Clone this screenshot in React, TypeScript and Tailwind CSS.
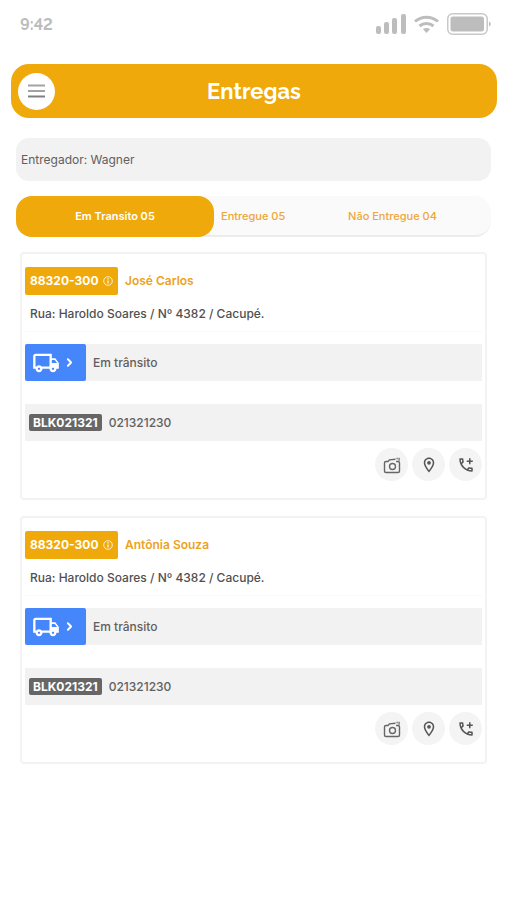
import { useState } from "react";
import { MdOutlineLocalShipping, MdOutlineAddIcCall, MdOutlineLocationOn } from "react-icons/md";
import { ChevronRight } from "lucide-react";

const deliveries = [
  { zip: "88320-300", name: "José Carlos", address: "Rua: Haroldo Soares / Nº 4382 / Cacupé.", code: "BLK021321", number: "021321230" },
  { zip: "88320-300", name: "Antônia Souza", address: "Rua: Haroldo Soares / Nº 4382 / Cacupé.", code: "BLK021321", number: "021321230" },
];

function StatusBar() {
  return (
    <div className="flex h-12 items-center justify-between pl-5 pr-[15px]">
      <time className="pt-[2px] font-['Raleway','Lato',sans-serif] text-base font-bold text-[#bcbcbc] lining-nums">9:42</time>
      <div className="flex items-center gap-2">
        <svg width="30" height="20" viewBox="0 0 30 20" fill="#bdbdbd" aria-hidden="true">
          <rect x="0" y="12" width="5" height="8" rx="2" />
          <rect x="8" y="8" width="5" height="12" rx="2" />
          <rect x="16" y="4" width="5" height="16" rx="2" />
          <rect x="25" y="0" width="5" height="20" rx="2" />
        </svg>
        <svg width="25" height="18" viewBox="0 0 25 18" fill="none" stroke="#bdbdbd" strokeWidth="3" aria-hidden="true">
          <path d="M1 6.5C7.500 .7 17.500 .7 24 6.500" />
          <path d="M5.500 11C9.500 7.500 15.500 7.500 19.500 11" />
          <path d="M9 14.300c2-1.700 5-1.700 7 0L12.500 18z" fill="#bdbdbd" stroke="none" />
        </svg>
        <svg width="44" height="22" viewBox="0 0 44 22" aria-hidden="true">
          <rect x="0.750" y="0.750" width="39.500" height="20.500" rx="5" fill="none" stroke="#c9c9c9" strokeWidth="1.500" />
          <rect x="3.500" y="3.500" width="33.500" height="15" rx="2.500" fill="#bdbdbd" />
          <path d="M42 8.500c2.300.8 2.300 4.200 0 5z" fill="#bdbdbd" />
        </svg>
      </div>
    </div>
  );
}

function CameraIcon() {
  return (
    <svg width="18" height="18" viewBox="0 0 18 18" fill="none" stroke="#666" strokeWidth="1.400" aria-hidden="true">
      <path d="M12.500 3.200 6.500 3.800 5 5.500H3A1.500 1.500 0 0 0 1.500 7v8A1.500 1.500 0 0 0 3 16.500h12a1.500 1.500 0 0 0 1.500-1.500V7A1.500 1.500 0 0 0 15 5.500h-2" />
      <circle cx="9.500" cy="10.500" r="3" />
      <path d="M13.500 2.500h1.200M15.500 2.500h1.200M15.500 4h1.200" />
    </svg>
  );
}

const roundButton = "flex size-[33px] items-center justify-center rounded-full bg-[#f4f4f4] text-[#555]";

function DeliveryCard({ delivery }: { delivery: (typeof deliveries)[number] }) {
  return (
    <article className="rounded-[4px] border-2 border-[#f3f3f3] px-[3px] pt-[13px] pb-[17px]">
      <div className="flex items-center gap-[7px]">
        <button className="flex h-7 w-[93px] items-center justify-between rounded-[2px] bg-[#efa90a] px-[5px] text-[12px] font-bold text-white">
          {delivery.zip}
          <svg width="10" height="10" viewBox="0 0 10 10" fill="none" stroke="#fff" strokeOpacity=".8" aria-hidden="true">
            <circle cx="5" cy="5" r="4.300" />
            <path d="M5 4.400V7.500M5 2.300v1.200" strokeWidth="1.500" />
          </svg>
        </button>
        <h2 className="text-[12px] font-semibold text-[#eda21c]">{delivery.name}</h2>
      </div>
      <p className="mt-[9px] border-b border-[#fafafa] pb-[7px] pl-[5px] text-[12px] leading-5 font-medium text-[#505050]">{delivery.address}</p>
      <div className="mt-[12px] flex h-[37px] items-center gap-[7px] bg-[#f2f2f2]">
        <button aria-label="Em trânsito" className="flex h-full w-[61px] items-center gap-[3px] rounded-[2px] bg-[#4686fb] pl-[7px] text-white">
          <MdOutlineLocalShipping size={28} />
          <ChevronRight size={13} strokeWidth={3.5} />
        </button>
        <span className="text-[12px] font-medium text-[#606060]">Em trânsito</span>
      </div>
      <div className="mt-[23px] flex h-[37px] items-center gap-[7px] bg-[#f2f2f2] pl-1">
        <span className="flex h-[17px] items-center rounded-[2px] bg-[#666] px-1 text-[12px] font-bold text-white">{delivery.code}</span>
        <span className="text-[12px] font-medium text-[#606060]">{delivery.number}</span>
      </div>
      <div className="mt-[7px] flex justify-end gap-1">
        <button aria-label="Câmera" className={roundButton}><CameraIcon /></button>
        <button aria-label="Localização" className={roundButton}><MdOutlineLocationOn size={18} /></button>
        <button aria-label="Ligar" className={roundButton}><MdOutlineAddIcCall size={18} /></button>
      </div>
    </article>
  );
}

export default function App() {
  const [tab, setTab] = useState(0);
  const tabs = [
    { label: "Em Transito 05", place: "w-[198px] shrink-0 text-center" },
    { label: "Entregue 05", place: "w-[80px] shrink-0 pl-[7px] text-left" },
    { label: "Não Entregue 04", place: "grow text-center" },
  ];
  return (
    <div className="min-h-screen bg-white font-['Inter','Liberation_Sans',sans-serif]">
      <StatusBar />
      <header className="mt-4 mr-[9px] ml-[11px] flex h-[54px] items-center rounded-[18px] bg-[#efa90a] px-[7px]">
        <button aria-label="Menu" className="flex size-[37px] shrink-0 items-center justify-center rounded-full bg-white">
          <svg width="17" height="14" viewBox="0 0 17 14" aria-hidden="true">
            <path d="M0 1.500h17M0 7h17" stroke="#a3a3a3" strokeWidth="2" />
            <path d="M0 12.500h17" stroke="#808080" strokeWidth="2" />
          </svg>
        </button>
        <h1 className="grow pr-[37px] text-center font-['Raleway','Lato',sans-serif] text-[22px] font-bold text-white">Entregas</h1>
      </header>
      <main>
        <p className="mt-5 mr-[15px] ml-4 flex h-[43px] items-center rounded-[13px] bg-[#f2f2f2] px-[5px] text-[12px] text-[#606060]">Entregador: Wagner</p>
        <nav className="mt-[15px] mr-[15px] ml-4 flex h-[41px] rounded-[16px] border-b-2 border-[#ececec] bg-[#fafafa]">
          {tabs.map((item, i) => (
            <button
              key={item.label}
              onClick={() => setTab(i)}
              className={`${item.place} h-[41px] rounded-[16px] text-[11px] whitespace-nowrap ${tab === i ? "bg-[#efa90a] font-semibold text-white" : "font-medium text-[#eda63a]"}`}
            >
              {item.label}
            </button>
          ))}
        </nav>
        <section className="mt-[15px] mr-[19px] ml-5 flex flex-col gap-4">
          {deliveries.map((d) => <DeliveryCard key={d.name} delivery={d} />)}
        </section>
      </main>
    </div>
  );
}
